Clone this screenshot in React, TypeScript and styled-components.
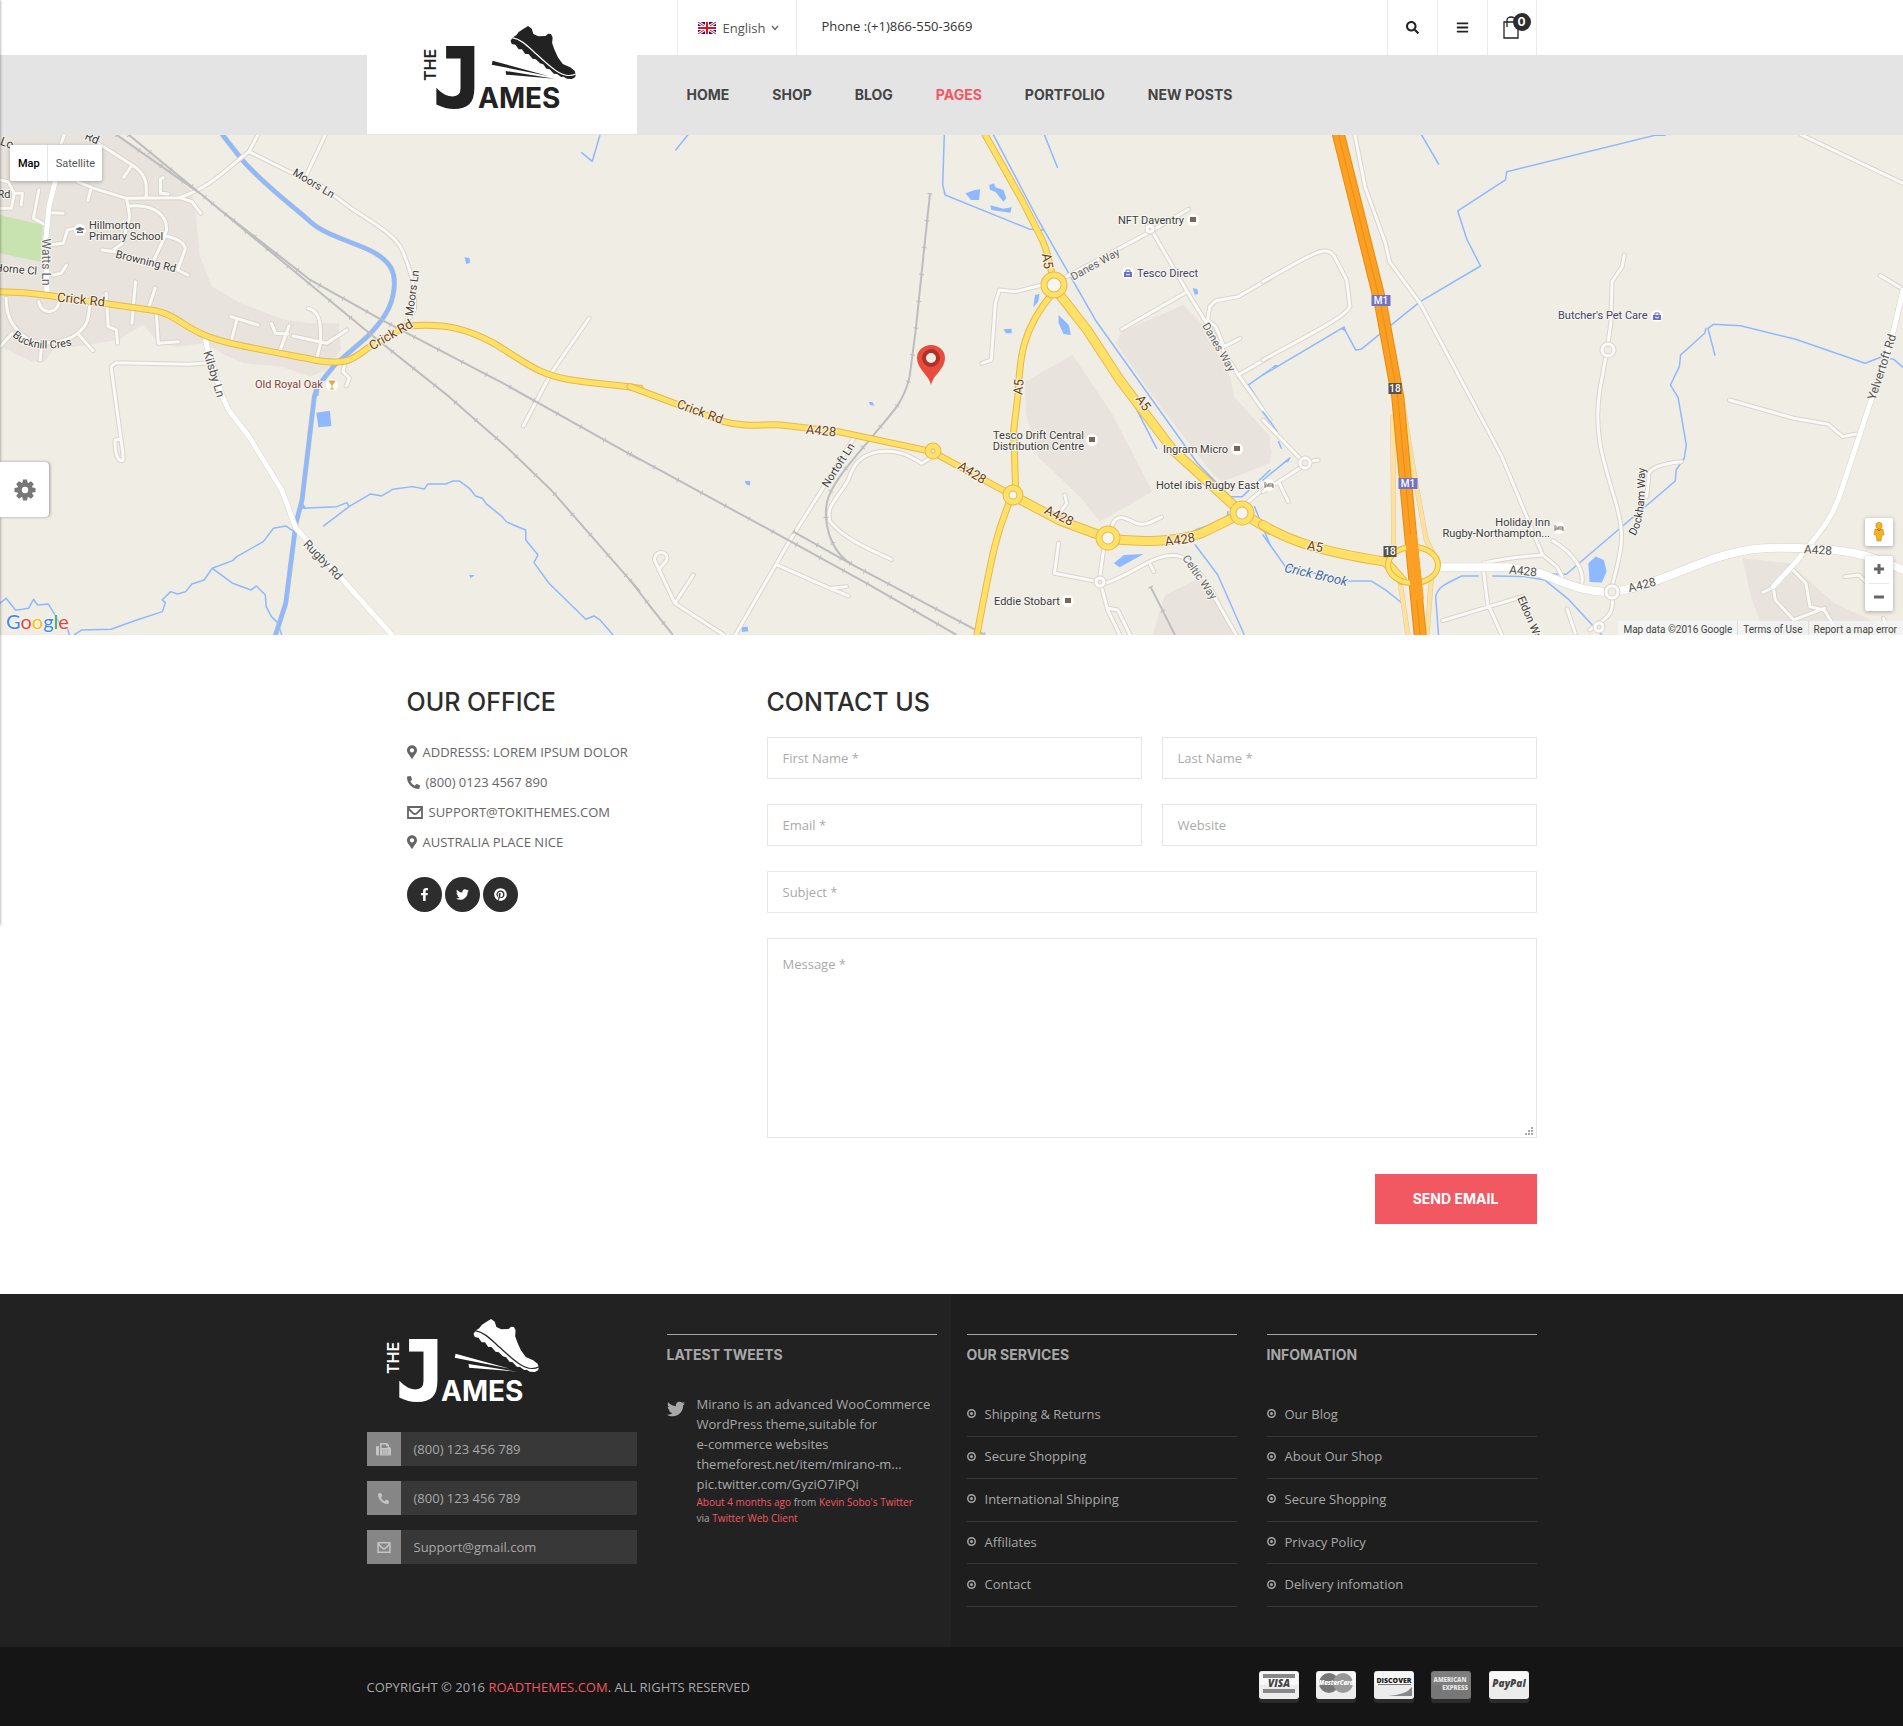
import React from 'react';
import styled, { createGlobalStyle, css } from 'styled-components';
import {
  FaBars, FaFacebookF, FaMapMarkerAlt, FaPhoneAlt, FaPinterest, FaSearch, FaTwitter,
} from 'react-icons/fa';

const display = '"Inter", "Lato", sans-serif';
const body = '"Open Sans", "Noto Sans", sans-serif';
const accent = '#f25862';

const GlobalStyle = createGlobalStyle`
  * { box-sizing: border-box; }
  body { margin: 0; background: #fff; color: #666; font: 13px/20px ${body}; overflow-x: hidden; }
  a { color: inherit; text-decoration: none; }
  ul { margin: 0; padding: 0; list-style: none; }
  button { cursor: pointer; }
`;

const Container = styled.div`
  width: 100%;
  max-width: 1170px;
  margin: 0 auto;
`;

/* ---------- logo ---------- */

const Drawing = styled.svg`
  display: block;
  overflow: visible;
`;
const LogoText = styled.text<{ $size: number; $weight?: number; $mono?: boolean }>`
  font-family: ${(p) => (p.$mono ? '"DejaVu Sans Mono", monospace' : display)};
  font-size: ${(p) => p.$size}px;
  font-weight: ${(p) => p.$weight ?? 700};
`;

function Logo({ color, ground }: { color: string; ground: string }) {
  return (
    <Drawing width="153" height="84" viewBox="0 0 153 84" fill={color} role="img" aria-label="The James">
      <LogoText $size={16} $weight={600} transform="translate(12 55) rotate(-90)">THE</LogoText>
      <LogoText $size={82} $mono x="9" y="81" stroke={color} strokeWidth="2">J</LogoText>
      <LogoText $size={28} x="54" y="82">AMES</LogoText>
      <g transform="translate(-74.3 -26) scale(.4082 .3333)">
        <path d="M437 78 L446 86 L450 102 L462 109 L480 108 L486 101 L493 102 L497 112 L496 130 L502 150 L510 172 L522 192 L540 202 L551 212 L554 224 L552 232 L544 237 L532 236 L524 230 L518 231 L508 222 L500 221 L490 208 L482 206 L474 193 L466 190 L456 178 L448 176 L438 162 L430 162 L422 148 L414 148 L406 134 L397 132 L394 122 L400 112 L408 106 L414 96 L426 86 Z" />
        <path d="M398 113 C420 118 434 136 450 154 S485 195 505 212 S540 230 554 222" fill="none" stroke={ground} strokeWidth="3.5" />
        <path d="M350 182 L348 194 L486 228 Z M382 213 L383 224 L502 236 Z" />
      </g>
    </Drawing>
  );
}

/* ---------- header ---------- */

const Header = styled.header`
  background: linear-gradient(#fff 55px, #e4e4e4 55px);
`;
const HeaderInner = styled(Container)`
  display: flex;
  gap: 40px;
  height: 135px;
`;
const Brand = styled.a`
  flex: 0 0 270px;
  height: 134px;
  padding: 26px 0 0 57px;
  background: #fff;
`;
const HeaderMain = styled.div`
  flex: 1;
  display: flex;
  flex-direction: column;
`;
const TopRow = styled.div`
  display: flex;
  height: 55px;
`;
const Language = styled.label`
  display: flex;
  align-items: center;
  width: 120px;
  padding-left: 20px;
  border: solid #ebebeb;
  border-width: 0 1px;
  color: #555;
  select {
    appearance: none;
    border: 0;
    padding: 0;
    margin: 0 5px 0 7px;
    background: none;
    color: inherit;
    font: 13px/20px ${body};
  }
`;
const Phone = styled.p`
  margin: 0;
  padding: 16px 0 0 25px;
  flex: 1;
  color: #333;
`;
const ToolButton = styled.button`
  position: relative;
  display: flex;
  align-items: center;
  justify-content: center;
  width: 50px;
  padding: 0;
  border: 0;
  border-left: 1px solid #ebebeb;
  background: none;
  color: #222;
  &:last-child { border-right: 1px solid #ebebeb; }
`;
const Badge = styled.span`
  position: absolute;
  top: 13px;
  left: 25px;
  width: 18px;
  height: 18px;
  border-radius: 50%;
  background: #2d2d2d;
  color: #fff;
  font: 700 12px/18px ${display};
  text-align: center;
`;
const Nav = styled.nav`
  display: flex;
  flex: 1;
  align-items: center;
  gap: 43px;
  padding-left: 10px;
`;
const NavLink = styled.a<{ $active?: boolean }>`
  color: ${(p) => (p.$active ? accent : '#444')};
  font: 700 14px/20px ${display};
`;

function Flag() {
  return (
    <svg width="18" height="12" viewBox="0 0 18 12" aria-hidden="true">
      <rect width="18" height="12" fill="#14147a" />
      <path d="M0 0 L18 12 M18 0 L0 12" stroke="#fff" strokeWidth="3" />
      <path d="M0 0 L18 12 M18 0 L0 12" stroke="#e0101f" strokeWidth="1" />
      <path d="M9 0 V12 M0 6 H18" stroke="#fff" strokeWidth="4" />
      <path d="M9 0 V12 M0 6 H18" stroke="#e0101f" strokeWidth="2" />
    </svg>
  );
}

function Chevron() {
  return (
    <svg width="8" height="6" viewBox="0 0 8 6" aria-hidden="true">
      <path d="M1 1 L4 4.5 L7 1" fill="none" stroke="#666" strokeWidth="1.4" />
    </svg>
  );
}

function Bag() {
  return (
    <svg width="18" height="23" viewBox="0 0 18 23" aria-hidden="true">
      <path d="M1 6 H15 V22 H1 Z M4 11 V4 C4 0 12 0 12 4 V11" fill="none" stroke="#222" strokeWidth="1.3" />
    </svg>
  );
}

const navItems = ['HOME', 'SHOP', 'BLOG', 'PAGES', 'PORTFOLIO', 'NEW POSTS'];

function PageHeader() {
  return (
    <Header>
      <HeaderInner>
        <Brand href="#"><Logo color="#222" ground="#fff" /></Brand>
        <HeaderMain>
          <TopRow>
            <Language>
              <Flag />
              <select aria-label="Language"><option>English</option></select>
              <Chevron />
            </Language>
            <Phone>Phone :(+1)866-550-3669</Phone>
            <ToolButton aria-label="Search"><FaSearch size={13} /></ToolButton>
            <ToolButton aria-label="Menu"><FaBars size={13} /></ToolButton>
            <ToolButton aria-label="Cart"><Bag /><Badge>0</Badge></ToolButton>
          </TopRow>
          <Nav>
            {navItems.map((n) => <NavLink key={n} href="#" $active={n === 'PAGES'}>{n}</NavLink>)}
          </Nav>
        </HeaderMain>
      </HeaderInner>
    </Header>
  );
}

/* ---------- map ---------- */

const land = '#f0ede5';

const MapFrame = styled.section`
  position: relative;
  height: 500px;
  overflow: hidden;
  background: ${land};
`;
const MapCanvas = styled.svg`
  display: block;
  width: 100%;
  height: 500px;
`;
const Line = styled.path`
  fill: none;
  stroke-linejoin: round;
  stroke-linecap: round;
  vector-effect: non-scaling-stroke;
`;
const Rail = styled(Line)`
  stroke: #bdbdbd;
  stroke-linecap: butt;
`;
const Label = styled.text<{ $size?: number; $color?: string; $italic?: boolean }>`
  font-family: Roboto, sans-serif;
  font-size: ${(p) => p.$size ?? 12}px;
  font-style: ${(p) => (p.$italic ? 'italic' : 'normal')};
  fill: ${(p) => p.$color ?? '#3c3c3c'};
  stroke: #f7f5ef;
  stroke-width: 2px;
  paint-order: stroke;
`;

type Sheet = {
  x: number;
  urban: string;
  park?: string;
  ponds: string;
  streams: string;
  river?: string;
  minor: string;
  white?: string;
  wide?: string;
  ramps?: string;
  yellow: string;
  trunk?: string;
  motorway?: string;
  rails: string;
};

/* The area is surveyed in three sheets that share one grid scale. */
const sheets: Sheet[] = [
  {
    x: 0,
    urban: 'M0 14 L290 14 L400 100 L470 185 L480 260 L490 380 L520 470 L590 520 L700 570 L760 580 L830 580 L835 660 L800 720 L760 740 L690 710 L600 700 L560 680 L500 640 L430 650 L390 640 L350 585 L290 630 L130 660 L110 695 L80 695 L0 650 Z',
    park: 'M0 255 L105 285 L100 395 L0 370 Z',
    river: 'M545 14 L590 85 C650 170 720 230 760 275 S880 340 920 370 S970 430 965 480 S940 570 900 620 L820 705 C790 750 775 770 770 800 L740 1110 L725 1180 L700 1420 L675 1515',
    streams: 'M740 1135 L825 1130 L850 1118 L855 1130 L793 1188 M855 1130 L908 1092 L935 1098 L962 1078 L1010 1070 L1040 1077 L1048 1062 L1092 1062 L1110 1053 L1125 1053 L1150 1075 L1165 1098 L1182 1105 L1190 1120 L1230 1160 L1240 1175 L1258 1185 L1288 1200 L1288 1230 L1318 1275 L1308 1298 L1345 1360 L1435 1468 L1455 1458 L1470 1470 L1502 1515 M720 1205 L700 1188 L670 1195 L645 1235 L580 1280 L570 1292 L520 1315 L500 1350 L470 1362 L455 1385 L435 1392 L418 1385 L397 1410 L405 1418 L398 1445 L335 1470 L272 1498 L200 1500 L182 1515 M520 1315 L570 1360 L615 1380 L628 1368 L650 1395 L652 1430 L665 1460 L680 1478 L690 1515 M0 1420 L15 1405 L38 1440 L55 1438 L70 1435 L82 1408 L92 1425 L118 1422 L130 1445 L150 1490 L165 1495 L170 1515 M1425 68 L1451 94 L1470 14',
    ponds: 'M775 848 L808 842 L812 888 L780 892 Z M1138 382 l12 2 l2 14 l-10 4 z M1149 1335 l14 0 l-10 10 z M735 1105 L750 1135 L730 1137 Z M770 780 L782 782 L780 798 L768 800 Z',
    minor: 'M190 155 L230 175 L310 205 L440 203 C520 170 560 110 610 65 L700 120 L790 170 L860 235 C930 290 970 320 985 360 S1020 470 1015 540 L995 580 M610 65 L632 14 M752 132 L797 14 M240 40 L330 110 C365 145 358 170 358 205 M322 108 L303 142 M400 143 L393 148 L393 190 L412 192 M440 203 L470 215 L492 250 M310 205 L318 260 L300 340 L275 362 M250 360 L290 367 M318 228 C380 220 410 260 408 300 L400 330 L375 395 M405 318 C450 330 460 350 450 370 L435 420 L460 435 M222 180 L215 212 M158 14 L150 40 M125 248 L155 250 M95 180 L82 265 L112 285 M120 345 L155 340 L165 300 L185 295 M130 435 L150 430 L163 405 M0 150 L20 155 L35 190 L55 190 L52 225 M0 235 L28 235 L35 190 M15 505 C15 560 30 590 60 620 S160 640 190 610 S215 560 220 530 M95 515 C100 555 140 555 145 515 M98 690 L102 650 M190 610 L228 662 M30 610 L0 650 M332 455 L323 580 M380 475 L365 530 M260 490 L265 590 L285 600 L288 640 M383 550 L388 640 L437 635 M565 560 L632 585 M580 570 L567 632 M755 535 C790 545 785 600 785 640 L775 690 M665 580 L675 610 L705 612 M708 588 L685 665 M718 618 L800 640 L850 600 M845 700 L840 725 L856 745 L848 768 M502 700 L460 703 L285 698 L272 710 L300 960 L302 990 C290 1000 280 970 282 930 L295 928 M1443 565 L1350 730 L1282 888',
    white: 'M135 155 L120 230 L112 330 L115 485 M502 620 L510 665 L545 800 L560 840 L610 920 L690 1080 L725 1195 L840 1350 L960 1515',
    yellow: 'M0 485 L60 488 L115 496 L380 542 C430 555 450 590 500 615 S600 650 770 690 C840 705 860 695 900 655 L990 590 C1090 575 1150 600 1210 640 C1290 700 1320 735 1400 750 S1500 763 1568 775',
    rails: 'M285 14 L490 190 L905 610 L1100 800 L1240 950 L1350 1080 L1568 1385 M315 14 L540 240 L760 450 L935 570 L1240 765 L1568 990',
  },
  {
    x: 630,
    urban: 'M1355 525 L1400 580 L1470 740 L1480 800 L1568 920 L1568 1000 L1450 1055 L1420 1020 L1300 830 L1190 640 L1205 605 Z M1085 675 L1180 850 L1280 1085 L1150 1175 L1110 1110 L1000 980 L970 850 L968 755 Z M1395 1345 L1430 1370 L1480 1515 L1280 1515 L1310 1395 Z',
    ponds: 'M822 190 L845 180 L858 178 L855 210 L835 210 Z M880 165 L892 160 L895 172 L915 180 L922 205 L915 215 L895 185 L882 180 Z M883 226 L915 236 L935 232 L932 248 L885 240 Z M992 495 L1003 492 L1000 515 L988 532 Z M1050 555 L1075 585 L1080 615 L1062 612 L1050 580 Z M915 598 l20 -2 l0 14 l-14 0 z M1378 475 l12 2 l2 14 l-8 4 z M585 815 l10 2 l3 10 l-10 -2 z M281 1053 l13 0 l0 14 l-10 -4 z M273 1492 l15 -2 l2 14 l-16 2 z M1185 1300 L1210 1275 L1258 1272 L1200 1312 Z',
    streams: 'M770 14 L766 165 L772 195 L980 298 L1015 300 M890 14 L1000 270 L1070 420 L1140 570 L1390 1000 M1125 610 L1200 740 L1290 955 M1015 14 L1047 112 M142 14 L112 60 M1568 720 L1515 765 L1568 865 M1390 1000 L1470 1100 L1500 1100 L1568 1020 M1465 1145 L1462 1168 L1385 1200 M1530 1130 L1568 1245 M1385 1245 L1440 1335 L1505 1515',
    minor: 'M1010 465 L945 485 L905 480 L895 520 L885 690 L862 700 M1070 440 L1275 305 L1368 238 M1280 305 L1365 485 L1490 735 L1568 870 M1365 485 L1205 598 M1568 445 L1490 500 L1435 512 L1420 530 L1415 570 L1435 590 L1455 650 L1495 625 M1490 735 L1568 680 M548 925 L475 1070 L390 1235 L258 1515 M360 1305 L490 1375 L535 1398 M495 1375 L530 1370 M735 985 L715 1000 C680 975 660 960 610 965 C560 975 545 1010 535 1050 C500 1120 480 1130 490 1175 C520 1220 570 1250 640 1288 M230 1515 L110 1420 L60 1290 C60 1260 95 1260 90 1290 L70 1320 M110 1420 L155 1335 M1180 1190 C1190 1150 1210 1160 1240 1180 C1270 1190 1280 1170 1302 1162 M1065 1095 L1070 1120 L1055 1145 M1050 1240 L1040 1330 L1145 1355 M1165 1360 C1240 1330 1290 1260 1350 1280 C1400 1310 1430 1400 1450 1440 L1485 1515 M1160 1260 L1150 1350 M1155 1370 L1170 1440 L1200 1515 M1170 1435 L1195 1440 L1225 1515 M1275 1305 l8 20 M1500 1130 L1568 1060',
    yellow: 'M0 770 L120 825 L230 875 C290 895 330 880 370 885 L510 905 L740 965 L935 1095 M870 14 L960 210 L1010 330 C1025 370 1028 400 1035 440 M1035 490 C960 600 955 680 950 800 L940 900 L945 1090 M935 1100 C900 1200 890 1250 850 1515',
    trunk: 'M935 1095 L1050 1170 L1170 1225 C1250 1240 1340 1235 1400 1210 L1500 1150 L1568 1200 M1050 490 L1120 600 L1200 750 L1330 960 L1500 1150',
    rails: 'M0 972 L380 1225 L580 1360 L800 1515 M400 1205 L550 1308 L870 1515 M735 190 L722 340 L700 600 L685 740 C670 820 640 850 600 910 S490 1060 482 1120 S490 1270 550 1308 M0 1350 L50 1430 L105 1515 M1275 1370 L1300 1430 L1335 1515',
  },
  {
    x: 1263,
    urban: 'M0 920 L22 960 L20 980 L0 1000 Z M1175 1285 L1290 1300 L1400 1420 L1568 1515 L1230 1515 L1195 1400 Z',
    ponds: 'M797 1300 L815 1280 L835 1290 L842 1325 L830 1358 L800 1356 Z M15 718 L30 704 L40 708 Z M48 998 L68 980 L62 996 Z M190 596 L200 588 L204 606 Z',
    streams: 'M388 14 L430 102 M985 16 L960 16 L597 125 L594 150 L477 243 L500 330 L533 408 L385 515 L240 658 L227 660 L197 592 L0 735 M0 845 L35 905 M38 935 L45 955 M65 985 L0 1050 M1085 595 L1082 610 L1023 675 L1020 710 L998 765 L1017 803 L1037 945 L1032 985 L1012 1020 L1010 1053 L743 1333 L710 1332 M1107 675 L1090 595 L1103 583 L1170 587 L1305 628 L1475 700 L1513 682 L1545 688 L1568 712 M0 1215 L55 1310 L210 1353 L265 1353 L300 1380 L338 1417 M430 1515 L423 1400 C428 1370 450 1360 487 1338 L527 1338 M563 1338 L640 1340 L690 1350 L750 1410 L810 1490 L830 1515',
    minor: 'M225 14 L250 170 L300 340 L310 395 L385 520 L520 830 L585 980 L685 1275 M0 455 L80 400 C140 360 160 350 175 380 L205 450 L213 530 C200 560 150 590 0 690 M0 870 L90 985 M135 990 L115 995 L0 1085 M40 1060 L62 1115 M885 375 L880 410 L855 455 L852 580 L845 640 M840 680 L825 780 C810 900 830 980 860 1100 S880 1250 855 1370 M1318 14 L1568 160 M1142 810 L1300 865 L1385 883 L1420 920 L1455 912 M1512 437 L1568 478 M1025 995 C980 1000 940 1015 945 1040 L940 1100 M540 1300 C600 1280 650 1280 685 1275 L720 1310 L735 1345 M710 1232 C760 1270 790 1320 780 1365 M540 1320 L550 1420 L585 1515 M440 1472 L635 1400 M855 1400 C860 1440 850 1460 822 1480 L800 1500 M745 1437 L765 1510 M1290 1310 L1330 1360 L1340 1430 L1375 1440 L1405 1500 M1250 1372 L1255 1410 L1300 1470 L1375 1435 M1225 1387 L1250 1372 M1425 1340 L1460 1335 L1480 1360 M1520 1465 L1535 1515',
    white: 'M1568 480 L1545 600 L1490 810 L1420 1070 C1390 1190 1350 1220 1310 1290 L1250 1370',
    wide: 'M440 1312 L600 1312 L680 1330 C740 1360 780 1385 855 1387 C950 1370 1040 1310 1120 1280 S1240 1252 1330 1255 S1480 1270 1568 1320',
    ramps: 'M340 800 L370 1030 L400 1230 L425 1290 M318 860 L320 1240 M335 1350 L355 1515 M412 1350 L402 1515',
    yellow: '',
    trunk: 'M0 1185 C60 1230 140 1265 300 1295 L340 1350',
    motorway: 'M185 14 L288 520 L330 800 L368 1300 L385 1515',
    rails: '',
  },
];

const minorCasing = '#d9d5cc';
const roadCasing = '#e6b84c';
const roadFill = '#ffe168';

function SheetArt({ s }: { s: Sheet }) {
  return (
    <g transform={`translate(${s.x} -5) scale(.4082 .3333)`}>
      <path d={s.urban} fill="#e8e4dd" />
      {s.park && <path d={s.park} fill="#c8e3b0" />}
      <path d={s.ponds} fill="#8fb9ff" />
      <Line d={s.streams} stroke="#8fb9ff" strokeWidth="1.5" />
      {s.river && <Line d={s.river} stroke="#c4bfb4" strokeWidth="5" />}
      {s.river && <Line d={s.river} stroke="#8fb9ff" strokeWidth="4" />}
      <Line d={s.minor} stroke={minorCasing} strokeWidth="5" />
      <Line d={s.minor} stroke="#faf9f6" strokeWidth="3" />
      {s.ramps && <Line d={s.ramps} stroke="#dcc9a0" strokeWidth="5" />}
      {s.ramps && <Line d={s.ramps} stroke="#ffe19c" strokeWidth="4" />}
      {s.white && <Line d={s.white} stroke={minorCasing} strokeWidth="6" />}
      {s.white && <Line d={s.white} stroke="#fff" strokeWidth="5" />}
      {s.wide && <Line d={s.wide} stroke={minorCasing} strokeWidth="9" />}
      {s.wide && <Line d={s.wide} stroke="#fff" strokeWidth="8" />}
      <Rail d={s.rails} strokeWidth="2" />
      <Rail d={s.rails} strokeWidth="5" strokeDasharray="1 26" />
      <Line d={s.yellow} stroke={roadCasing} strokeWidth="7" />
      {s.trunk && <Line d={s.trunk} stroke={roadCasing} strokeWidth="10" />}
      <Line d={s.yellow} stroke={roadFill} strokeWidth="5" />
      {s.trunk && <Line d={s.trunk} stroke={roadFill} strokeWidth="8" />}
      {s.motorway && <Line d={s.motorway} stroke="#e58d0c" strokeWidth="13" />}
      {s.motorway && <Line d={s.motorway} stroke="#fb9f25" strokeWidth="11" />}
      {s.motorway && <Line d={s.motorway} stroke="#e9900f" strokeWidth="1" />}
    </g>
  );
}

const roundabouts = [
  { x: 1054, y: 150, r: 10 }, { x: 933, y: 316, r: 5 }, { x: 1013, y: 360, r: 7 }, { x: 1108, y: 403, r: 9 }, { x: 1242, y: 378, r: 9 },
];
const paleRoundabouts = [
  { x: 1100, y: 447, r: 4 }, { x: 1608, y: 215, r: 6 }, { x: 1305, y: 328, r: 5 }, { x: 1599, y: 492, r: 4 }, { x: 1612, y: 457, r: 6 }, { x: 1150, y: 94, r: 3 },
];

const brown = '#6e3f0e';
const turned: { t: string; x: number; y: number; a: number; size?: number; color?: string; italic?: boolean }[] = [
  { t: 'Moors Ln', x: 314, y: 48, a: 31, size: 11 },
  { t: 'Rd', x: 92, y: 3, a: 24 },
  { t: 'Lo', x: 7, y: 8, a: 20 },
  { t: 'Rd', x: 4, y: 59, a: 0, size: 11 },
  { t: 'Watts Ln', x: 46, y: 127, a: 90, color: '#666' },
  { t: 'Browning Rd', x: 146, y: 126, a: 14, size: 11 },
  { t: 'Horne Cl', x: 16, y: 134, a: 5, size: 11 },
  { t: 'Crick Rd', x: 81, y: 165, a: 6, size: 13, color: brown },
  { t: 'Crick Rd', x: 391, y: 200, a: -30, size: 13, color: brown },
  { t: 'Kilsby Ln', x: 214, y: 239, a: 73, color: '#555' },
  { t: 'Moors Ln', x: 412, y: 158, a: -82, size: 11 },
  { t: 'Rugby Rd', x: 323, y: 425, a: 46, color: '#555' },
  { t: 'Crick Rd', x: 700, y: 277, a: 20, size: 13, color: brown },
  { t: 'A428', x: 821, y: 296, a: 6, size: 13, color: brown },
  { t: 'A428', x: 972, y: 338, a: 32, size: 13, color: brown },
  { t: 'A428', x: 1059, y: 381, a: 26, size: 13, color: brown },
  { t: 'A428', x: 1180, y: 405, a: -8, size: 13, color: brown },
  { t: 'A5', x: 1047, y: 126, a: 80, size: 13, color: brown },
  { t: 'A5', x: 1019, y: 252, a: -85, size: 13, color: brown },
  { t: 'A5', x: 1143, y: 268, a: 56, size: 13, color: brown },
  { t: 'A5', x: 1315, y: 412, a: 10, size: 13, color: brown },
  { t: 'Nortoft Ln', x: 838, y: 330, a: -57, size: 11 },
  { t: 'Danes Way', x: 1095, y: 129, a: -29, size: 11, color: '#666' },
  { t: 'Danes Way', x: 1219, y: 212, a: 60, size: 11, color: '#666' },
  { t: 'Celtic Way', x: 1200, y: 442, a: 55, size: 11, color: '#666' },
  { t: 'Yelvertoft Rd', x: 1882, y: 232, a: -72, color: '#555' },
  { t: 'A428', x: 1523, y: 436, a: 6, color: '#555' },
  { t: 'A428', x: 1642, y: 450, a: -14, color: '#555' },
  { t: 'A428', x: 1818, y: 415, a: 3, color: '#555' },
  { t: 'Crick Brook', x: 1316, y: 440, a: 13, size: 13, color: '#3d68a8', italic: true },
  { t: 'Eldon Way', x: 1531, y: 485, a: 67, size: 11 },
];

const curved = [
  { id: 'crescent', t: 'Bucknill Cres', d: 'M12 201 Q34 222 80 208' },
  { id: 'dockham', t: 'Dockham Way', d: 'M1635 401 Q1647 384 1645 325' },
];

const places: { t: string; x: number; y: number; end?: boolean; color?: string }[] = [
  { t: 'Hillmorton', x: 89, y: 94 },
  { t: 'Primary School', x: 89, y: 105 },
  { t: 'Old Royal Oak', x: 255, y: 253, color: '#84443c' },
  { t: 'NFT Daventry', x: 1118, y: 89 },
  { t: 'Tesco Direct', x: 1137, y: 142, color: '#44446a' },
  { t: 'Tesco Drift Central', x: 1084, y: 304, end: true },
  { t: 'Distribution Centre', x: 1084, y: 315, end: true },
  { t: 'Ingram Micro', x: 1163, y: 318 },
  { t: 'Hotel ibis Rugby East', x: 1156, y: 354 },
  { t: 'Eddie Stobart', x: 994, y: 470 },
  { t: "Butcher's Pet Care", x: 1558, y: 184, color: '#44446a' },
  { t: 'Holiday Inn', x: 1550, y: 391, end: true },
  { t: 'Rugby-Northampton...', x: 1550, y: 402, end: true },
];

const markers: { x: number; y: number; kind: 'block' | 'bag' | 'bed' | 'school' | 'glass' }[] = [
  { x: 80, y: 95, kind: 'school' }, { x: 332, y: 250, kind: 'glass' }, { x: 1193, y: 85, kind: 'block' },
  { x: 1128, y: 138, kind: 'bag' }, { x: 1092, y: 305, kind: 'block' }, { x: 1237, y: 314, kind: 'block' },
  { x: 1269, y: 350, kind: 'bed' }, { x: 1068, y: 466, kind: 'block' }, { x: 1657, y: 181, kind: 'bag' }, { x: 1559, y: 393, kind: 'bed' },
];
const glyphs = {
  block: <rect x="-3" y="-3" width="6" height="5" fill="#7d6358" />,
  bag: (
    <g>
      <path d="M-2 -1 V-3 H2 V-1" fill="none" stroke="#6a72c4" />
      <path d="M-4 -1 H4 V4 H-4 Z" fill="#6a72c4" />
      <path d="M-2 1 Q0 3 2 1" fill="none" stroke="#fff" />
    </g>
  ),
  bed: <path d="M-4 -3 V3 M-4 1 H4 V3 M4 1 V-1 H-1 V1 M-3 -1 H-2" fill="none" stroke="#7d6358" />,
  school: <path d="M-5 -1 L0 -3 L5 -1 L0 1 Z M-3 1 V3 H3 V1 L0 2 Z" fill="#666" />,
  glass: <path d="M-3 -4 H3 L0 0 Z M0 0 V4 M-2 4 H2" fill="#e8a33a" stroke="#e8a33a" />,
};
const shields = [
  { t: 'M1', x: 1381, y: 166, w: 19, fill: '#7272c8' }, { t: 'M1', x: 1408, y: 349, w: 19, fill: '#7272c8' },
  { t: '18', x: 1395, y: 254, w: 13, fill: '#55534c' }, { t: '18', x: 1390, y: 417, w: 13, fill: '#55534c' },
];

const MapControl = styled.div`
  position: absolute;
  display: flex;
  background: #fff;
  border-radius: 2px;
  box-shadow: 0 1px 4px rgba(0, 0, 0, 0.3);
`;
const MapTypes = styled(MapControl)`
  top: 10px;
  left: 10px;
`;
const MapType = styled.button<{ $on?: boolean }>`
  height: 36px;
  padding: 0 7px 0 8px;
  border: 0;
  background: none;
  font: ${(p) => (p.$on ? 500 : 400)} 11px Roboto, sans-serif;
  color: ${(p) => (p.$on ? '#000' : '#565656')};
  & + & { border-left: 1px solid #e6e6e6; }
`;
const Pegman = styled(MapControl).attrs({ as: 'button', 'aria-label': 'Street view' })`
  right: 10px;
  bottom: 89px;
  width: 28px;
  height: 28px;
  padding: 0;
  border: 0;
  align-items: center;
  justify-content: center;
`;
const Zoom = styled(MapControl)`
  right: 10px;
  bottom: 24px;
  width: 28px;
  flex-direction: column;
  padding: 0 4px;
`;
const ZoomButton = styled.button`
  height: 27px;
  padding: 2px 0 0;
  border: 0;
  background: none;
  & + & { height: 28px; border-top: 1px solid #e6e6e6; }
`;
const Credits = styled.div`
  position: absolute;
  right: 0;
  bottom: 0;
  display: flex;
  height: 14px;
  padding-right: 1px;
  background: rgba(245, 245, 245, 0.75);
  font: 10px/17px Roboto, sans-serif;
  color: #444;
  > * { padding: 0 5px; }
  > * + * { border-left: 1px solid #ddd; }
`;
const GoogleMark = styled.a`
  position: absolute;
  left: 6px;
  bottom: 2px;
  font: 20px/24px Lato, sans-serif;
  text-shadow: 0 0 2px #fff, 0 0 2px #fff;
`;
const Letter = styled.span<{ $c: string }>`
  color: ${(p) => p.$c};
`;

function MapSection() {
  return (
    <MapFrame>
      <MapCanvas viewBox="0 0 1903 500" preserveAspectRatio="xMidYMid slice" role="img" aria-label="Map of our office">
        {sheets.map((s) => <SheetArt key={s.x} s={s} />)}
        {paleRoundabouts.map((r) => (
          <g key={r.x}>
            <circle cx={r.x} cy={r.y} r={r.r} fill={land} stroke={minorCasing} strokeWidth="5" />
            <circle cx={r.x} cy={r.y} r={r.r} fill="none" stroke="#fdfcfa" strokeWidth="3" />
          </g>
        ))}
        {roundabouts.map((r) => (
          <g key={r.x}>
            <circle cx={r.x} cy={r.y} r={r.r} fill="#f7f5ef" stroke={roadCasing} strokeWidth="7" />
            <circle cx={r.x} cy={r.y} r={r.r} fill="none" stroke={roadFill} strokeWidth="5" />
          </g>
        ))}
        <ellipse cx="1413" cy="430" rx="25" ry="18" fill="none" stroke={roadCasing} strokeWidth="6" />
        <ellipse cx="1413" cy="430" rx="25" ry="18" fill="none" stroke={roadFill} strokeWidth="4" />
        <path d="M1411 400 L1414 430 L1418 465" stroke="#fb9f25" strokeWidth="12" fill="none" />
        {turned.map((l) => (
          <Label key={`${l.x}-${l.y}`} $size={l.size} $color={l.color} $italic={l.italic} textAnchor="middle" dy="4" transform={`translate(${l.x} ${l.y}) rotate(${l.a})`}>{l.t}</Label>
        ))}
        {curved.map((c) => (
          <g key={c.id}>
            <path id={c.id} d={c.d} fill="none" />
            <Label $size={11}><textPath href={`#${c.id}`}>{c.t}</textPath></Label>
          </g>
        ))}
        {places.map((l) => (
          <Label key={l.t} $size={11} $color={l.color} x={l.x} y={l.y} textAnchor={l.end ? 'end' : 'start'}>{l.t}</Label>
        ))}
        {markers.map((m) => (
          <g key={m.x} transform={`translate(${m.x} ${m.y})`}>
            <circle r="6" fill="#fff" />
            {glyphs[m.kind]}
          </g>
        ))}
        {shields.map((s) => (
          <g key={s.x} transform={`translate(${s.x} ${s.y})`}>
            <rect x={-s.w / 2} y="-6" width={s.w} height="11" fill={s.fill} />
            <text textAnchor="middle" y="3" fill="#fff" fontFamily="Roboto, sans-serif" fontSize="10" fontWeight="500">{s.t}</text>
          </g>
        ))}
        <path d="M931 250 C929 240 917 234 917 223 A14 13 0 0 1 945 223 C945 234 933 240 931 250 Z" fill="#e84c3d" />
        <circle cx="931" cy="223" r="7" fill="#f0ede5" stroke="#ad3228" strokeWidth="4" />
      </MapCanvas>
      <MapTypes>
        <MapType $on>Map</MapType>
        <MapType>Satellite</MapType>
      </MapTypes>
      <Pegman>
        <svg width="12" height="20" viewBox="0 0 12 20" aria-hidden="true">
          <circle cx="6" cy="3.5" r="3.2" fill="#f5b222" stroke="#c98a14" strokeWidth=".6" />
          <path d="M2 7 H10 L11 13 H9 L8 19 H4 L3 13 H1 Z" fill="#f5b222" stroke="#c98a14" strokeWidth=".6" />
          <path d="M4 7 L6 9 L8 7" fill="none" stroke="#e0531e" />
        </svg>
      </Pegman>
      <Zoom>
        <ZoomButton aria-label="Zoom in">
          <svg width="12" height="12" viewBox="0 0 12 12" aria-hidden="true"><path d="M6 1 V11 M1 6 H11" stroke="#666" strokeWidth="3" /></svg>
        </ZoomButton>
        <ZoomButton aria-label="Zoom out">
          <svg width="12" height="12" viewBox="0 0 12 12" aria-hidden="true"><path d="M1 6 H11" stroke="#666" strokeWidth="3" /></svg>
        </ZoomButton>
      </Zoom>
      <GoogleMark href="#">
        <Letter $c="#4285f4">G</Letter><Letter $c="#ea4335">o</Letter><Letter $c="#fbbc05">o</Letter>
        <Letter $c="#4285f4">g</Letter><Letter $c="#34a853">l</Letter><Letter $c="#ea4335">e</Letter>
      </GoogleMark>
      <Credits>
        <span>Map data ©2016 Google</span>
        <a href="#">Terms of Use</a>
        <a href="#">Report a map error</a>
      </Credits>
    </MapFrame>
  );
}

/* ---------- side panel handle ---------- */

const SidePanel = styled.aside`
  position: absolute;
  top: 0;
  left: -10px;
  width: 10px;
  height: 925px;
  box-shadow: 0 0 3px rgba(0, 0, 0, 0.5);
  z-index: 2;
`;
const PanelHandle = styled.button`
  position: absolute;
  top: 462px;
  left: 10px;
  width: 49px;
  height: 55px;
  padding: 0;
  border: 0;
  border-radius: 0 4px 4px 0;
  background: #fff;
  box-shadow: 1px 0 3px rgba(0, 0, 0, 0.35);
  color: #777;
  svg { display: block; margin: 0 auto; }
`;

function Cog() {
  return (
    <svg width="22" height="22" viewBox="-11 -11 22 22" aria-hidden="true">
      {[0, 45, 90, 135].map((a) => (
        <path key={a} d="M-2 -10.5 H2 L3 -5 H-3 Z M-2 10.5 H2 L3 5 H-3 Z" fill="currentColor" transform={`rotate(${a})`} />
      ))}
      <circle r="5.5" fill="none" stroke="currentColor" strokeWidth="4.5" />
    </svg>
  );
}

/* ---------- contact ---------- */

const ContactGrid = styled(Container)`
  display: grid;
  grid-template-columns: minmax(0, 37fr) minmax(0, 77fr);
  gap: 30px;
  padding: 54px 0 70px;
`;
const Office = styled.section`
  padding-left: 40px;
`;
const Heading = styled.h2`
  margin: 0 0 22px;
  color: #2d2d2d;
  font: 500 25px/26px ${display};
`;
const OfficeLine = styled.li`
  display: flex;
  align-items: center;
  gap: 6px;
  height: 30px;
`;
const Marker = styled(FaMapMarkerAlt)`
  width: 10px;
  height: 14px;
`;
const Socials = styled.div`
  display: flex;
  gap: 3px;
  margin-top: 20px;
`;
const Social = styled.a`
  display: flex;
  align-items: center;
  justify-content: center;
  width: 35px;
  height: 35px;
  border-radius: 50%;
  background: #2d2d2d;
  color: #fff;
`;
const Form = styled.form`
  display: grid;
  grid-template-columns: 1fr 1fr;
  gap: 25px 20px;
`;
const Field = styled.div<{ $wide?: boolean }>`
  position: relative;
  grid-column: ${(p) => (p.$wide ? '1 / -1' : 'auto')};
`;
const control = css`
  display: block;
  width: 100%;
  border: 1px solid #e6e6e6;
  border-radius: 0;
  background: #fff;
  color: #555;
  font: 13px/20px ${body};
  &::placeholder { color: #aaa; opacity: 1; }
`;
const Input = styled.input`
  ${control}
  height: 42px;
  padding: 0 15px;
`;
const TextArea = styled.textarea`
  ${control}
  height: 200px;
  padding: 15px;
  resize: none;
`;
const Grip = styled.svg`
  position: absolute;
  right: 4px;
  bottom: 3px;
`;
const Submit = styled.button`
  grid-column: 2;
  justify-self: end;
  width: 162px;
  height: 50px;
  margin-top: 11px;
  border: 0;
  background: ${accent};
  color: #fff;
  font: 700 14px/20px ${display};
`;

function Envelope({ size }: { size: number }) {
  return (
    <svg width={size} height={size - 3} viewBox="0 0 16 13" aria-hidden="true">
      <path d="M1 1 H15 V12 H1 Z" fill="none" stroke="currentColor" strokeWidth="1.8" />
      <path d="M1 2 C4 5 6 8 8 8 S12 5 15 2" fill="none" stroke="currentColor" strokeWidth="1.9" />
    </svg>
  );
}

const fields = [
  { label: 'First Name *' }, { label: 'Last Name *' }, { label: 'Email *' }, { label: 'Website' }, { label: 'Subject *', wide: true },
];

function Contact() {
  return (
    <ContactGrid as="main">
      <Office>
        <Heading>OUR OFFICE</Heading>
        <ul>
          <OfficeLine><Marker />ADDRESSS: LOREM IPSUM DOLOR</OfficeLine>
          <OfficeLine><FaPhoneAlt size={13} />(800) 0123 4567 890</OfficeLine>
          <OfficeLine><Envelope size={16} />SUPPORT@TOKITHEMES.COM</OfficeLine>
          <OfficeLine><Marker />AUSTRALIA PLACE NICE</OfficeLine>
        </ul>
        <Socials>
          <Social href="#" aria-label="Facebook"><FaFacebookF size={13} /></Social>
          <Social href="#" aria-label="Twitter"><FaTwitter size={13} /></Social>
          <Social href="#" aria-label="Pinterest"><FaPinterest size={13} /></Social>
        </Socials>
      </Office>
      <section>
        <Heading>CONTACT US</Heading>
        <Form onSubmit={(e) => e.preventDefault()}>
          {fields.map((f) => (
            <Field key={f.label} $wide={f.wide}>
              <Input type="text" placeholder={f.label} aria-label={f.label} />
            </Field>
          ))}
          <Field $wide>
            <TextArea placeholder="Message *" aria-label="Message *" />
            <Grip width="8" height="8" viewBox="0 0 8 8" fill="#aaa" aria-hidden="true">
              <path d="M6 0h2v2h-2z M3 3h2v2h-2z M6 3h2v2h-2z M0 6h2v2h-2z M3 6h2v2h-2z M6 6h2v2h-2z" />
            </Grip>
          </Field>
          <Submit type="submit">SEND EMAIL</Submit>
        </Form>
      </section>
    </ContactGrid>
  );
}

/* ---------- footer ---------- */

const Footer = styled.footer`
  background: linear-gradient(90deg, #222 50%, #1e1e1e 50%);
  color: #a8a8a8;
`;
const FooterGrid = styled(Container)`
  display: grid;
  grid-template-columns: repeat(4, minmax(0, 1fr));
  gap: 30px;
  padding: 25px 0 40px;
`;
const FooterLogo = styled.a`
  display: block;
  height: 84px;
  margin: 0 0 29px 20px;
`;
const ContactList = styled.ul`
  display: grid;
  gap: 15px;
`;
const ContactItem = styled.li`
  display: flex;
  align-items: center;
  gap: 13px;
  height: 34px;
  background: #383838;
`;
const IconCell = styled.span`
  display: flex;
  align-items: center;
  justify-content: center;
  width: 34px;
  height: 34px;
  background: #868686;
  color: #c4c4c4;
`;
const FooterColumn = styled.section`
  padding-top: 15px;
`;
const FooterTitle = styled.h3`
  margin: 0 0 29px;
  padding-top: 10px;
  border-top: 1px solid #a5a5a5;
  font: 700 14px/20px ${display};
`;
const Tweet = styled.div`
  display: flex;
  gap: 12px;
  > svg { flex: none; margin-top: 6px; }
  p { margin: 0; }
`;
const TweetMeta = styled.p`
  font-size: 10px;
  line-height: 16px;
`;
const Accent = styled.a`
  color: ${accent};
`;
const LinkList = styled.ul`
  display: grid;
  grid-auto-rows: 1fr;
  height: 213px;
`;
const LinkItem = styled.li`
  display: flex;
  align-items: center;
  gap: 9px;
  padding-bottom: 2px;
  border-bottom: 1px solid #363636;
`;
const BottomBar = styled.div`
  background: #151515;
`;
const BottomInner = styled(Container)`
  display: flex;
  align-items: center;
  justify-content: space-between;
  padding: 24px 8px 23px 0;
`;
const Cards = styled.div`
  display: flex;
  justify-content: space-between;
  width: 270px;
`;
const CardText = styled.text<{ $size: number }>`
  font-family: ${body};
  font-size: ${(p) => p.$size}px;
  font-weight: 800;
  text-anchor: middle;
`;

function Fax() {
  return (
    <svg width="15" height="13" viewBox="0 0 15 13" aria-hidden="true">
      <path d="M0 4 Q0 3 1 3 H3 V12.5 H1 Q0 12.5 0 11.5 Z M4 0 H11 L13 2 V4 Q15 4 15 5.5 V11.5 Q15 12.5 14 12.5 H4 Z" fill="currentColor" />
      <path d="M5.5 1.5 H10 V3 H11.5 V5 H5.5 Z" fill="#868686" />
      <path d="M6 7 H13 M6 9 H13 M6 11 H13" stroke="#868686" strokeWidth=".7" strokeDasharray="1.4 1" />
    </svg>
  );
}

function Bullet() {
  return (
    <svg width="9" height="9" viewBox="0 0 9 9" aria-hidden="true">
      <circle cx="4.5" cy="4.5" r="3.7" fill="none" stroke="currentColor" strokeWidth="1.5" />
      <circle cx="4.5" cy="4.5" r="1.5" fill="currentColor" />
    </svg>
  );
}

function Card({ name, dark, children }: { name: string; dark?: boolean; children: React.ReactNode }) {
  return (
    <Drawing width="40" height="32" viewBox="0 0 40 32" role="img" aria-label={name}>
      <rect y="4" width="40" height="28" rx="3" fill="#2c2c2c" />
      <rect width="40" height="28" rx="3" fill={dark ? '#777' : '#ececec'} />
      <rect x="1" y="1" width="38" height="13" rx="2" fill={dark ? '#7e7e7e' : '#f8f8f8'} />
      {children}
    </Drawing>
  );
}

const columns = [
  { title: 'OUR SERVICES', links: ['Shipping & Returns', 'Secure Shopping', 'International Shipping', 'Affiliates', 'Contact'] },
  { title: 'INFOMATION', links: ['Our Blog', 'About Our Shop', 'Secure Shopping', 'Privacy Policy', 'Delivery infomation'] },
];

function PageFooter() {
  return (
    <Footer>
      <FooterGrid>
        <section>
          <FooterLogo href="#"><Logo color="#fff" ground="#222" /></FooterLogo>
          <ContactList>
            <ContactItem><IconCell><Fax /></IconCell>(800) 123 456 789</ContactItem>
            <ContactItem><IconCell><FaPhoneAlt size={11} /></IconCell>(800) 123 456 789</ContactItem>
            <ContactItem><IconCell><Envelope size={14} /></IconCell>Support@gmail.com</ContactItem>
          </ContactList>
        </section>
        <FooterColumn>
          <FooterTitle>LATEST TWEETS</FooterTitle>
          <Tweet>
            <FaTwitter size={18} />
            <div>
              <p>
                Mirano is an advanced WooCommerce WordPress theme,suitable for<br />e-commerce websites<br />
                <a href="#">themeforest.net/item/mirano-m...</a><br />
                <a href="#">pic.twitter.com/GyziO7iPQi</a>
              </p>
              <TweetMeta>
                <Accent href="#">About 4 months ago</Accent> from <Accent href="#">Kevin Sobo's Twitter</Accent><br />
                via <Accent href="#">Twitter Web Client</Accent>
              </TweetMeta>
            </div>
          </Tweet>
        </FooterColumn>
        {columns.map((c) => (
          <FooterColumn key={c.title}>
            <FooterTitle>{c.title}</FooterTitle>
            <LinkList>
              {c.links.map((l) => (
                <LinkItem key={l}><Bullet /><a href="#">{l}</a></LinkItem>
              ))}
            </LinkList>
          </FooterColumn>
        ))}
      </FooterGrid>
      <BottomBar>
        <BottomInner>
          <span>COPYRIGHT © 2016 <Accent href="#">ROADTHEMES.COM</Accent>. ALL RIGHTS RESERVED</span>
          <Cards>
            <Card name="Visa">
              <rect x="4" y="3" width="32" height="4" fill="#888" />
              <rect x="4" y="18" width="32" height="4" fill="#888" />
              <CardText $size={10} x="20" y="16" fill="#444" fontStyle="italic">VISA</CardText>
            </Card>
            <Card name="MasterCard">
              <circle cx="13" cy="12" r="10" fill="#777" />
              <circle cx="27" cy="12" r="10" fill="#999" />
              <CardText $size={6} x="20" y="14" fill="#fff" fontStyle="italic">MasterCard</CardText>
            </Card>
            <Card name="Discover">
              <path d="M14 25 Q32 24 38 16 V25 Z" fill="#888" />
              <CardText $size={7} x="20" y="12" fill="#222">DISCOVER</CardText>
              <rect x="4" y="13" width="33" height="1" fill="#777" />
            </Card>
            <Card name="American Express" dark>
              <CardText $size={6} x="19" y="11" fill="#e4e4e4">AMERICAN</CardText>
              <CardText $size={6} x="24" y="19" fill="#e4e4e4">EXPRESS</CardText>
            </Card>
            <Card name="PayPal">
              <CardText $size={10} x="20" y="16" fill="#444" fontStyle="italic">PayPal</CardText>
            </Card>
          </Cards>
        </BottomInner>
      </BottomBar>
    </Footer>
  );
}

export default function App() {
  return (
    <>
      <GlobalStyle />
      <SidePanel>
        <PanelHandle aria-label="Theme settings"><Cog /></PanelHandle>
      </SidePanel>
      <PageHeader />
      <MapSection />
      <Contact />
      <PageFooter />
    </>
  );
}
